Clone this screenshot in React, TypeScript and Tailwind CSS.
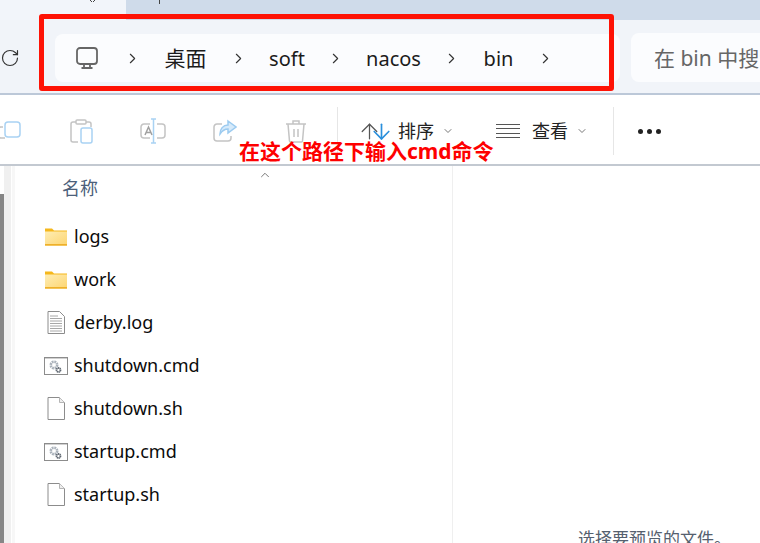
import { ChevronRight, ChevronDown, ChevronUp, RotateCw, ArrowUp, ArrowDown } from 'lucide-react'

const cjk = 'font-["Noto_Sans","Noto_Sans_CJK_SC",sans-serif]'

function Folder() {
  return (
    <svg width="22" height="18" viewBox="0 0 22 18">
      <defs>
        <linearGradient id="folderFill" x1="0" y1="0" x2="1" y2="1">
          <stop offset="0" stopColor="#feedb4" />
          <stop offset="1" stopColor="#fdd673" />
        </linearGradient>
      </defs>
      <path d="M0 0.500h7l2 2h13v15H0z" fill="#f5b71c" />
      <rect x="0" y="3.500" width="22" height="13" fill="url(#folderFill)" />
      <rect x="0" y="16" width="22" height="1.500" fill="#eeb02a" />
    </svg>
  )
}

function LogFile() {
  return (
    <svg width="18" height="23" viewBox="0 0 18 23">
      <path d="M1 .5h11.500l5 5v17H1z" fill="#fff" stroke="#8c8c8c" />
      <path d="M3 5h8M3 7.500h12M3 10h12M3 12.500h12M3 15h12M3 17.500h12M3 20h12" stroke="#a8a8a8" />
    </svg>
  )
}

function BlankFile() {
  return (
    <svg width="18" height="23" viewBox="0 0 18 23">
      <path d="M1 .5h11.500l5 5v17H1z" fill="#fff" stroke="#8c8c8c" />
      <path d="M12.500.5v5h5" fill="#eee" stroke="#b5b5b5" />
    </svg>
  )
}

function CmdFile() {
  return (
    <svg width="24" height="18" viewBox="0 0 24 18">
      <rect x=".5" y=".5" width="23" height="17" fill="#fff" stroke="#8c8c8c" />
      <rect x="1" y="1" width="22" height="1" fill="#d0d0d0" />
      <circle cx="10" cy="8" r="3.200" fill="none" stroke="#a9b1ba" strokeWidth="2.600" strokeDasharray="1.800 0.700" />
      <circle cx="14.500" cy="13" r="2" fill="none" stroke="#5e6670" strokeWidth="1.800" strokeDasharray="1.200 0.400" />
    </svg>
  )
}

function Row({ icon, name }: { icon: React.ReactNode; name: string }) {
  return (
    <div className="flex h-[43px] items-center">
      <div className="mr-[6px] flex w-[24px] justify-center">{icon}</div>
      <span className="text-[18px] text-[#0b0b0b]">{name}</span>
    </div>
  )
}

function Crumb({ children, w }: { children: React.ReactNode; w: string }) {
  return <span className={`${w} pt-[2px] text-center text-[20px] text-[#1b1b1b]`}>{children}</span>
}

const Sep = () => <ChevronRight size={17} strokeWidth={1.6} className="shrink-0 text-[#333]" />

export default function App() {
  return (
    <div className={`relative h-[543px] w-[760px] overflow-hidden bg-white ${cjk}`}>
      {/* tabs */}
      <div className="flex h-[20px]">
        <div className="flex w-[126px] justify-end bg-[#f2f5fa] pr-[28px]">
          <svg width="10" height="4" viewBox="0 0 10 4" fill="none" stroke="#444">
            <path d="M1 -1l3 3M8 -1l-3 3" />
          </svg>
        </div>
        <div className="flex-1 bg-[#cfdbea] pl-[33px]">
          <div className="h-[4px] w-[1px] bg-[#444]" />
        </div>
      </div>

      {/* address bar */}
      <div className="flex h-[75px] items-start border-b-2 border-[#bcc8d8] bg-[#f1f4f9]">
        <div className="flex h-[76px] w-[55px] items-center pl-[0px]">
          <RotateCw size={20} strokeWidth={1.4} className="text-[#333]" />
        </div>
        <div className="mt-[14px] flex h-[48px] w-[565px] items-center rounded-lg bg-[#fbfcfe] pl-[20px]">
          <svg width="24" height="24" viewBox="0 0 24 24" fill="none" stroke="#666" strokeWidth="1.8">
            <rect x="2" y="2" width="20" height="16" rx="3" />
            <path d="M9 18v4M15 18v4M6.500 22h11" />
          </svg>
          <div className="ml-[25px] flex items-center">
            <Sep />
            <Crumb w="w-[89px] text-[21px]">桌面</Crumb>
            <Sep />
            <Crumb w="w-[80px]">soft</Crumb>
            <Sep />
            <Crumb w="w-[99px]">nacos</Crumb>
            <Sep />
            <Crumb w="w-[77px]">bin</Crumb>
            <Sep />
          </div>
        </div>
        <div className="ml-[11px] mt-[13px] flex h-[49px] flex-1 items-center overflow-hidden whitespace-nowrap rounded-l-lg bg-[#fbfcfe] pl-[23px] pt-[2px] text-[21px] text-[#666]">
          在 bin 中搜索
        </div>
      </div>

      {/* toolbar */}
      <div className="flex h-[71px] items-center border-b-2 border-[#c3c9d1] bg-white pt-[3px]">
        <div className="flex w-[337px] items-center">
          <svg className="ml-[-2px]" width="24" height="24" viewBox="0 0 24 24" fill="none" strokeWidth="1.5">
            <rect x="7" y="3" width="15" height="15" rx="3" stroke="#a9d2f3" />
            <path d="M5 8H3a3 3 0 0 0-3 3v5a3 3 0 0 0 3 3h4" stroke="#c4c4c4" />
          </svg>
          <svg className="ml-[47px]" width="24" height="26" viewBox="0 0 24 26" fill="none" strokeWidth="1.5">
            <path d="M7 4H4a2 2 0 0 0-2 2v16a2 2 0 0 0 2 2h5M17 4h3a2 2 0 0 1 2 2v3" stroke="#c4c4c4" />
            <rect x="7" y="2" width="10" height="4" rx="1" stroke="#c4c4c4" />
            <rect x="12" y="10" width="11" height="15" rx="2" stroke="#a9d2f3" />
          </svg>
          <svg className="ml-[47px]" width="26" height="26" viewBox="0 0 26 26" fill="none" strokeWidth="1.5">
            <path d="M10 6H4a3 3 0 0 0-3 3v8a3 3 0 0 0 3 3h6M17 6h5a3 3 0 0 1 3 3v8a3 3 0 0 1-3 3h-5" stroke="#c4c4c4" />
            <path d="M11 1h5M11 25h5M13.500 1v24" stroke="#a9d2f3" />
            <path d="M5 17l3.500-8 3.500 8M6 14.500h5" stroke="#a0a0a0" />
          </svg>
          <svg className="ml-[47px]" width="24" height="24" viewBox="0 0 24 24" fill="none" strokeWidth="1.5">
            <path d="M9 5H4a3 3 0 0 0-3 3v11a3 3 0 0 0 3 3h11a3 3 0 0 0 3-3v-2" stroke="#c4c4c4" />
            <path d="M15 2l8 6-8 6v-4c-4 0-6 2-8 5 0-5 3-9 8-9z" stroke="#9ccbf0" fill="#d6eafa" />
          </svg>
          <svg className="ml-[48px]" width="22" height="24" viewBox="0 0 22 24" fill="none" stroke="#c4c4c4" strokeWidth="1.5">
            <path d="M1 5h20M8 5V2h6v3M3 5l1.500 17a1.500 1.500 0 0 0 1.500 1h10a1.500 1.500 0 0 0 1.500-1L19 5M9 10v8M13 10v8" />
          </svg>
        </div>
        <div className="h-[48px] w-[1px] bg-[#e6e6e6]" />
        <div className="ml-[19px] flex w-[30px] items-center">
          <ArrowUp size={25} strokeWidth={1.2} className="shrink-0 text-[#555]" />
          <ArrowDown size={25} strokeWidth={1.6} className="ml-[-13px] shrink-0 text-[#2a8fdc]" />
        </div>
        <span className="ml-[11px] text-[18px] text-[#222]">排序</span>
        <ChevronDown size={12} className="ml-[8px] text-[#777]" />
        <div className="ml-[42px] flex h-[15px] w-[24px] flex-col justify-between">
          <div className="h-[1px] bg-[#555]" />
          <div className="h-[1px] bg-[#555]" />
          <div className="h-[1px] bg-[#555]" />
          <div className="h-[1px] bg-[#555]" />
        </div>
        <span className="ml-[12px] text-[18px] text-[#222]">查看</span>
        <ChevronDown size={12} className="ml-[8px] text-[#777]" />
        <div className="ml-[25px] h-[48px] w-[1px] bg-[#e6e6e6]" />
        <div className="ml-[24px] flex gap-[4px]">
          <div className="size-[5px] rounded-full bg-[#222]" />
          <div className="size-[5px] rounded-full bg-[#222]" />
          <div className="size-[5px] rounded-full bg-[#222]" />
        </div>
      </div>

      {/* content */}
      <div className="flex h-[377px]">
        <div className="flex w-[15px] shrink-0">
          <div className="mt-[28px] w-[4px] bg-[#868686]" />
          <div className="w-[7px] bg-[#f0f0f0]" />
          <div className="w-[1px] bg-white" />
          <div className="w-[3px] bg-[#f7f7f7]" />
        </div>
        <div className="flex w-[438px] flex-col border-r border-[#efefef] pl-[29px]">
          <div className="flex h-[49px] items-start pl-[18px] pt-[9px] text-[18px] text-[#4c607a]">
            <span>名称</span>
            <ChevronUp size={14} strokeWidth={1.5} className="ml-[160px] mt-[-7px] text-[#666]" />
          </div>
          <Row icon={<Folder />} name="logs" />
          <Row icon={<Folder />} name="work" />
          <Row icon={<LogFile />} name="derby.log" />
          <Row icon={<CmdFile />} name="shutdown.cmd" />
          <Row icon={<BlankFile />} name="shutdown.sh" />
          <Row icon={<CmdFile />} name="startup.cmd" />
          <Row icon={<BlankFile />} name="startup.sh" />
        </div>
        <div className="flex flex-1 flex-col justify-end pl-[125px]">
          <div className="h-[16px] overflow-hidden whitespace-nowrap text-[17px] leading-[24px] text-[#55606e]">
            选择要预览的文件。
          </div>
        </div>
      </div>

      {/* annotation over the screenshot */}
      <div className="absolute left-[39px] top-[14px] h-[77px] w-[575px] rounded-[3px] border-[5px] border-[#fe1205]" />
      <div className="absolute left-[239px] top-[136px] whitespace-nowrap text-[21px] font-bold text-[#fe0000]">
        在这个路径下输入cmd命令
      </div>
    </div>
  )
}
